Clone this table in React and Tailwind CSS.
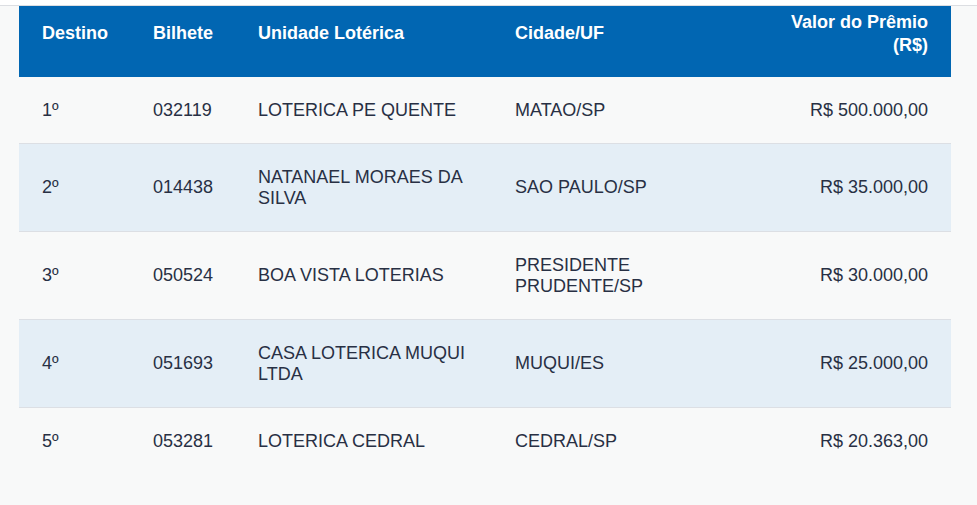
import React from 'react';

const rows = [
  { pos: '1º', ticket: '032119', unit: 'LOTERICA PE QUENTE', city: 'MATAO/SP', prize: 'R$ 500.000,00' },
  { pos: '2º', ticket: '014438', unit: 'NATANAEL MORAES DA SILVA', city: 'SAO PAULO/SP', prize: 'R$ 35.000,00' },
  { pos: '3º', ticket: '050524', unit: 'BOA VISTA LOTERIAS', city: 'PRESIDENTE PRUDENTE/SP', prize: 'R$ 30.000,00' },
  { pos: '4º', ticket: '051693', unit: 'CASA LOTERICA MUQUI LTDA', city: 'MUQUI/ES', prize: 'R$ 25.000,00' },
  { pos: '5º', ticket: '053281', unit: 'LOTERICA CEDRAL', city: 'CEDRAL/SP', prize: 'R$ 20.363,00' },
];

const cols = 'grid grid-cols-[111px_105px_257px_259px_200px]';

function App() {
  return (
    <div className="min-h-[505px] bg-[#f8f9f9] font-['Liberation_Sans',Arial,sans-serif] text-[18px]">
      <div className="h-[6px] bg-white border-b border-[#dcdee2]" />
      <div className="w-[932px] ml-[19px]">
        {/* Header */}
        <div className={`${cols} h-[71px] bg-[#0166b2] text-white font-bold items-center pb-[16px] leading-[23px]`}>
          <div className="px-[23px]">Destino</div>
          <div className="px-[23px]">Bilhete</div>
          <div className="px-[23px]">Unidade Lotérica</div>
          <div className="px-[23px]">Cidade/UF</div>
          <div className="px-[23px] text-right">Valor do Prêmio (R$)</div>
        </div>

        {/* Rows */}
        {rows.map((r, i) => (
          <div
            key={r.pos}
            className={`${cols} items-center leading-[21px] text-[#283044] ${i % 2 === 1 ? 'bg-[#e4eef6]' : 'bg-[#f8f9f9]'} ${i < rows.length - 1 ? 'border-b border-[#dcdfe4]' : ''}`}
          >
            <div className="px-[23px] py-[22.5px]">{r.pos}</div>
            <div className="px-[23px] py-[22.5px]">{r.ticket}</div>
            <div className="px-[23px] py-[22.5px]">{r.unit}</div>
            <div className="px-[23px] py-[22.5px]">{r.city}</div>
            <div className="px-[23px] py-[22.5px] text-right">{r.prize}</div>
          </div>
        ))}
      </div>
    </div>
  );
}

export default App;
